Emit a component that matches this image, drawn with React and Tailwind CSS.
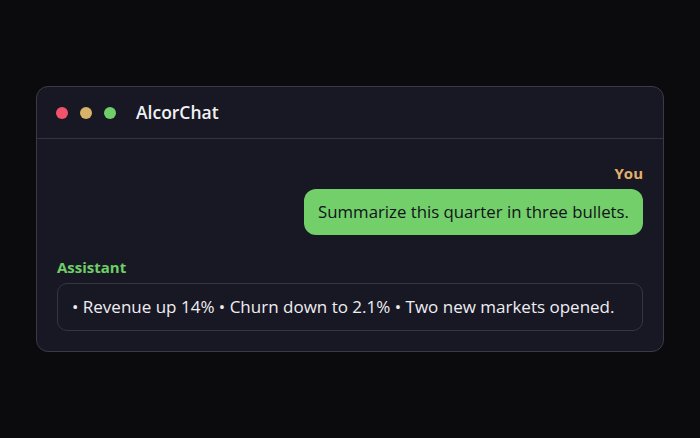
export default function App() {
  return (
    <div
      className="min-h-[438px] w-full bg-[#0b0b0e] flex items-center justify-center"
      style={{ fontFamily: '"Open Sans", "Noto Sans", sans-serif' }}
    >
      <div className="w-[628px] rounded-[12px] border border-[#3b3b47] bg-[#181824] overflow-hidden">
        {/* title bar */}
        <div className="h-[52px] flex items-center px-[19px] border-b border-[#34343f]">
          <div className="flex items-center gap-[12px]">
            <span className="w-[12px] h-[12px] rounded-full bg-[#f2536b]" />
            <span className="w-[12px] h-[12px] rounded-full bg-[#d9b26a]" />
            <span className="w-[12px] h-[12px] rounded-full bg-[#6fce68]" />
          </div>
          <span className="ml-[20px] text-[17.5px] font-semibold text-[#f1f1f4]">AlcorChat</span>
        </div>
        {/* messages */}
        <div className="px-[20px] pt-[24px] pb-[20px] flex flex-col">
          <div className="flex flex-col items-end">
            <span className="text-[15px] font-bold text-[#e3b26a] leading-[20px]">You</span>
            <div className="mt-[6px] rounded-[12px] bg-[#72cf6a] px-[14px] py-[11px] text-[16.8px] leading-[24px] text-[#11131a]">
              Summarize this quarter in three bullets.
            </div>
          </div>
          <div className="mt-[22px] flex flex-col items-start">
            <span className="text-[15px] font-bold text-[#6fce68] leading-[20px]">Assistant</span>
            <div className="mt-[6px] w-full rounded-[10px] border border-[#363641] px-[14px] py-[11px] text-[17px] leading-[24px] text-[#eeeef2]">
              • Revenue up 14% • Churn down to 2.1% • Two new markets opened.
            </div>
          </div>
        </div>
      </div>
    </div>
  );
}
